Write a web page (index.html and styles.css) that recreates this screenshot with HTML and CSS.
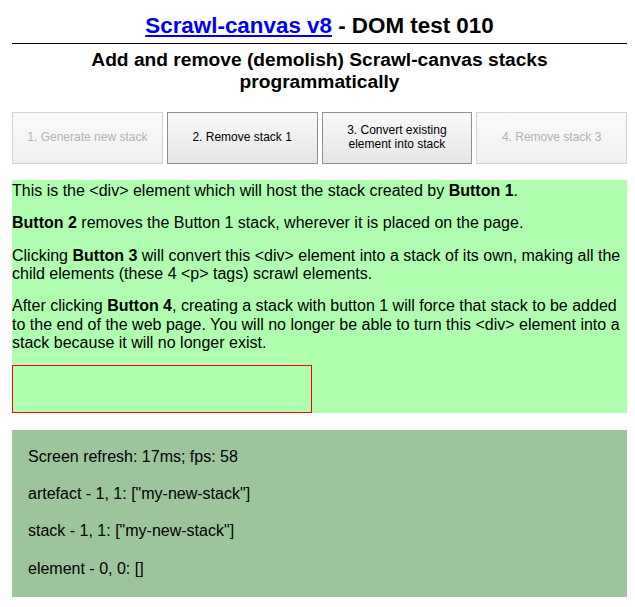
FILE: index.html
```html
<!DOCTYPE html>
<html lang="en">
<head>
<meta charset="utf-8">
<title>Scrawl-canvas v8 - DOM test 010</title>
<link rel="stylesheet" href="styles.css">
</head>
<body>
<div class="page">
  <h1 class="title"><a class="title-link" href="#">Scrawl-canvas v8</a> - DOM test 010</h1>
  <h2 class="subtitle">Add and remove (demolish) Scrawl-canvas stacks programmatically</h2>

  <div class="controls">
    <button class="btn" disabled>1. Generate new stack</button>
    <button class="btn">2. Remove stack 1</button>
    <button class="btn">3. Convert existing element into stack</button>
    <button class="btn" disabled>4. Remove stack 3</button>
  </div>

  <div class="host">
    <p class="para">This is the &lt;div&gt; element which will host the stack created by <b>Button 1</b>.</p>
    <p class="para"><b>Button 2</b> removes the Button 1 stack, wherever it is placed on the page.</p>
    <p class="para">Clicking <b>Button 3</b> will convert this &lt;div&gt; element into a stack of its own, making all the child elements (these 4 &lt;p&gt; tags) scrawl elements.</p>
    <p class="para para-last">After clicking <b>Button 4</b>, creating a stack with button 1 will force that stack to be added to the end of the web page. You will no longer be able to turn this &lt;div&gt; element into a stack because it will no longer exist.</p>
    <div class="stack-box"></div>
  </div>

  <div class="report">
    <div class="report-line">Screen refresh: 17ms; fps: 58</div>
    <div class="report-line">artefact - 1, 1: ["my-new-stack"]</div>
    <div class="report-line">stack - 1, 1: ["my-new-stack"]</div>
    <div class="report-line">element - 0, 0: []</div>
  </div>
</div>
</body>
</html>
```

FILE: styles.css
```css
html, body {
  margin: 0;
  padding: 0;
  background: #ffffff;
}

body {
  font-family: "Liberation Sans", Arial, Helvetica, sans-serif;
  font-size: 16px;
  color: #000;
}

.page {
  padding: 0 8px 10px 12px;
}

.title {
  margin: 13px 0 0;
  padding-bottom: 4px;
  border-bottom: 1px solid #000;
  font-size: 22.4px;
  line-height: 25.76px;
  font-weight: bold;
  text-align: center;
}

.title-link {
  color: #0000ee;
  text-decoration: underline;
}

.subtitle {
  margin: 5px 0 0;
  font-size: 19.2px;
  line-height: 22px;
  font-weight: bold;
  text-align: center;
}

.controls {
  display: grid;
  grid-template-columns: repeat(4, 1fr);
  gap: 4px;
  margin-top: 19px;
  height: 52px;
}

.btn {
  margin: 0;
  padding: 0 12px;
  border: 1px solid #8f8f8f;
  background: linear-gradient(#f9f9f9, #e6e6e6);
  font-family: "Liberation Sans", Arial, Helvetica, sans-serif;
  font-size: 12px;
  line-height: 13.8px;
  color: #000;
  text-align: center;
}

.btn:disabled {
  border-color: #d4d4d4;
  background: linear-gradient(#fbfbfb, #efefef);
  color: #b3b3b3;
}

.host {
  margin-top: 16px;
  background: #b0ffb0;
  padding-top: 2px;
}

.para {
  margin: 14px 0;
  line-height: 18.4px;
}

.para:first-child {
  margin-top: 0;
}

.para-last {
  margin-bottom: 12px;
}

.stack-box {
  width: 300px;
  height: 48px;
  box-sizing: border-box;
  border: 1px solid #ff0000;
}

.report {
  margin-top: 17px;
  background: #9cc59c;
  padding: 18px 16px 19px;
  display: flex;
  flex-direction: column;
  gap: 19px;
}

.report-line {
  line-height: 18.4px;
}
```
